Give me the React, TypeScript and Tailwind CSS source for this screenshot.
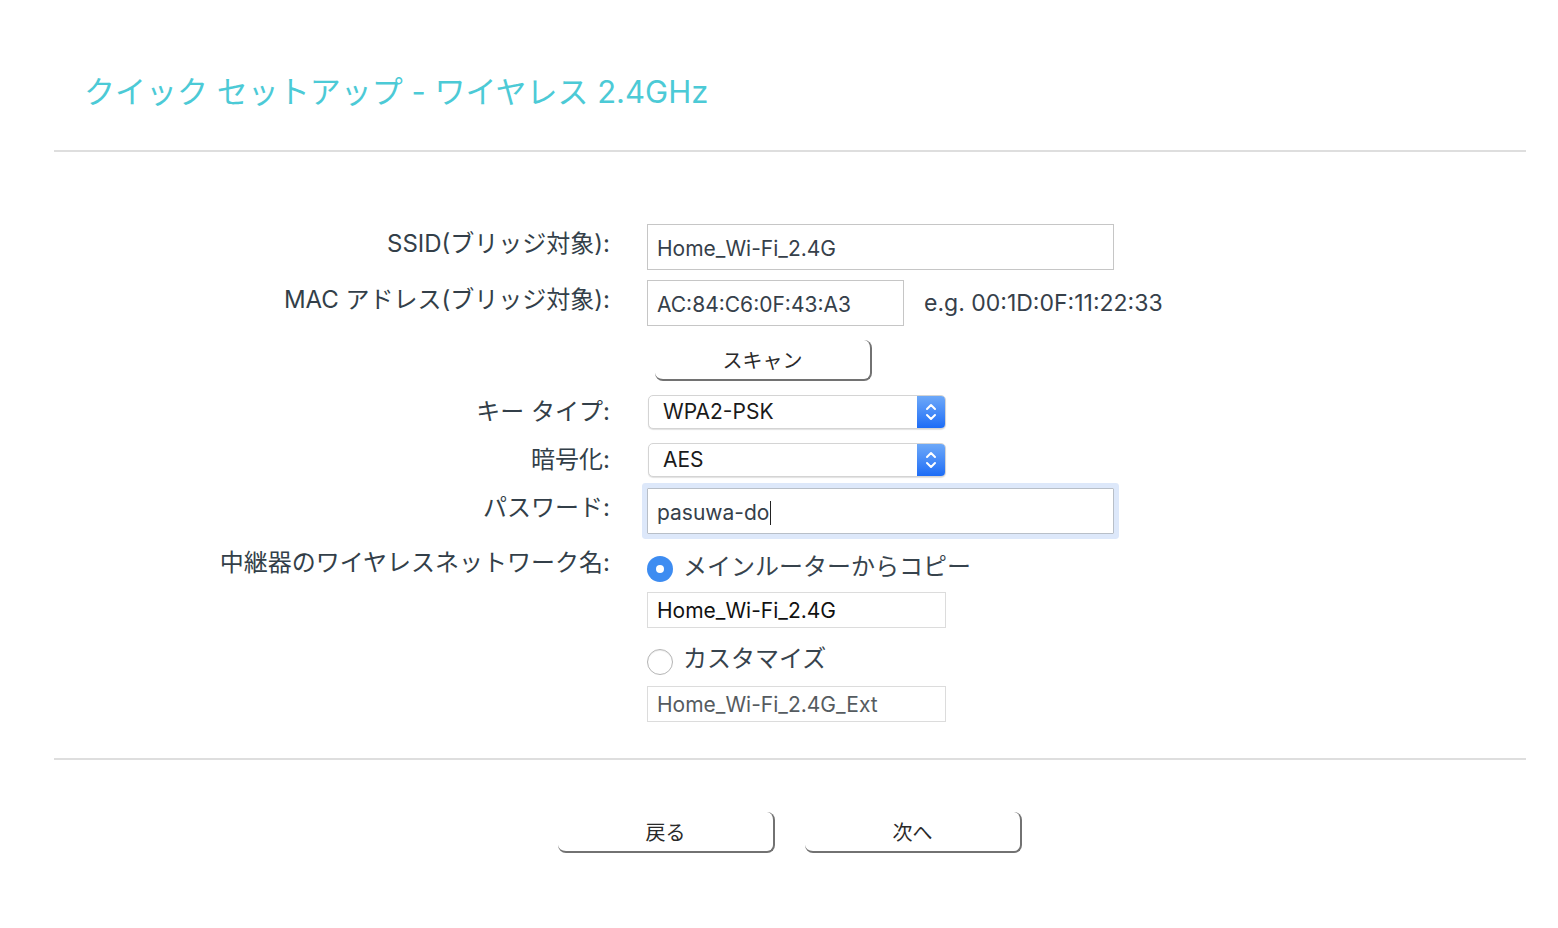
const font = { fontFamily: 'Inter, "Noto Sans CJK JP", sans-serif' };

function Row({
  label,
  mt,
  lift = "pb-[7px]",
  children,
}: {
  label?: string;
  mt: string;
  lift?: string;
  children: React.ReactNode;
}) {
  return (
    <div className={`flex items-center gap-[37px] ${mt}`}>
      <div className={`w-[556px] shrink-0 text-right text-[24px] leading-none text-[#333f49] ${lift}`}>
        {label}
      </div>
      {children}
    </div>
  );
}

function Select({ value }: { value: string }) {
  return (
    <div className="ml-[1px] flex h-[34px] w-[298px] items-stretch overflow-hidden rounded-[5px] border border-[#d4d4d4] bg-white shadow-[0_1px_1px_rgba(0,0,0,0.12)]">
      <div className="flex flex-1 items-center pl-[14px] text-[21px] text-[#1a1a1a]">{value}</div>
      <div className="flex w-[28px] items-center justify-center bg-gradient-to-b from-[#6da8f8] to-[#1c6cf6]">
        <svg width="14" height="22" viewBox="0 0 14 22" fill="none" stroke="white" strokeWidth="2" strokeLinecap="round" strokeLinejoin="round">
          <path d="M3 8 L7 4 L11 8" />
          <path d="M3 14 L7 18 L11 14" />
        </svg>
      </div>
    </div>
  );
}

function Radio({ checked, label }: { checked: boolean; label: string }) {
  return (
    <div className="flex h-[30px] items-center gap-[10px]">
      {checked ? (
        <div className="mt-[5px] flex h-[26px] w-[26px] items-center justify-center rounded-full bg-[#3d8cf1]">
          <div className="h-[8px] w-[8px] rounded-full bg-white" />
        </div>
      ) : (
        <div className="mt-[5px] h-[26px] w-[26px] rounded-full border border-[#b5b5b5] bg-white shadow-[inset_0_1px_1px_rgba(0,0,0,0.08)]" />
      )}
      <span className="text-[24px] leading-none text-[#37434d]">{label}</span>
    </div>
  );
}

function SketchButton({ label, className }: { label: string; className?: string }) {
  return (
    <button
      type="button"
      className={`flex items-center justify-center rounded-[8px] border-r-2 border-b-2 border-[#727272] bg-white pt-[3px] text-[20px] text-[#2a2a2a] ${className ?? ""}`}
    >
      {label}
    </button>
  );
}

export default function App() {
  return (
    <div className="min-h-[928px] w-full bg-white" style={font}>
      <div className="pl-[54px] pr-[32px]">
        <h1 className="pl-[30px] pt-[72px] text-[31px] leading-[40px] font-normal text-[#4ccad6]">
          クイック セットアップ - ワイヤレス 2.4GHz
        </h1>
        <div className="mt-[38px] h-[2px] bg-[#dedede]" />

        <Row label="SSID(ブリッジ対象):" mt="mt-[72px]">
          <div className="flex h-[46px] w-[467px] items-center border border-[#c6c6c6] pl-[9px] pt-[3px] text-[21px] text-[#36404a]">
            Home_Wi-Fi_2.4G
          </div>
        </Row>
        <Row label="MAC アドレス(ブリッジ対象):" mt="mt-[10px]">
          <div className="flex h-[46px] w-[257px] items-center border border-[#c6c6c6] pl-[9px] pt-[3px] text-[21px] text-[#36404a]">
            AC:84:C6:0F:43:A3
          </div>
          <span className="-ml-[17px] text-[23px] text-[#36404a]">e.g. 00:1D:0F:11:22:33</span>
        </Row>
        <Row mt="mt-[14px]">
          <SketchButton label="スキャン" className="ml-[8px] h-[41px] w-[217px]" />
        </Row>
        <Row label="キー タイプ:" mt="mt-[14px]" lift="pb-[1px]">
          <Select value="WPA2-PSK" />
        </Row>
        <Row label="暗号化:" mt="mt-[14px]" lift="pb-[1px]">
          <Select value="AES" />
        </Row>
        <Row label="パスワード:" mt="mt-[11px]">
          <div className="flex h-[46px] w-[467px] items-center rounded-[1px] border border-[#b8bfc8] pl-[9px] pt-[3px] text-[21px] text-[#36404a] shadow-[0_0_0_5px_#dde8fa]">
            pasuwa-do
            <span className="ml-[1px] inline-block h-[24px] w-[1px] bg-[#222]" />
          </div>
        </Row>
        <Row label="中継器のワイヤレスネットワーク名:" mt="mt-[17px]">
          <Radio checked label="メインルーターからコピー" />
        </Row>
        <Row mt="mt-[10px]">
          <div className="flex h-[36px] w-[299px] items-center border border-[#dcdcdc] pl-[9px] pt-[2px] text-[21px] text-[#111]">
            Home_Wi-Fi_2.4G
          </div>
        </Row>
        <Row mt="mt-[16px]">
          <Radio checked={false} label="カスタマイズ" />
        </Row>
        <Row mt="mt-[12px]">
          <div className="flex h-[36px] w-[299px] items-center border border-[#dcdcdc] pl-[9px] pt-[2px] text-[21px] text-[#555b60]">
            Home_Wi-Fi_2.4G_Ext
          </div>
        </Row>

        <div className="mt-[36px] h-[2px] bg-[#dedede]" />

        <div className="mt-[52px] flex justify-center gap-[30px]">
          <SketchButton label="戻る" className="h-[41px] w-[217px]" />
          <SketchButton label="次へ" className="h-[41px] w-[217px]" />
        </div>
      </div>
    </div>
  );
}
